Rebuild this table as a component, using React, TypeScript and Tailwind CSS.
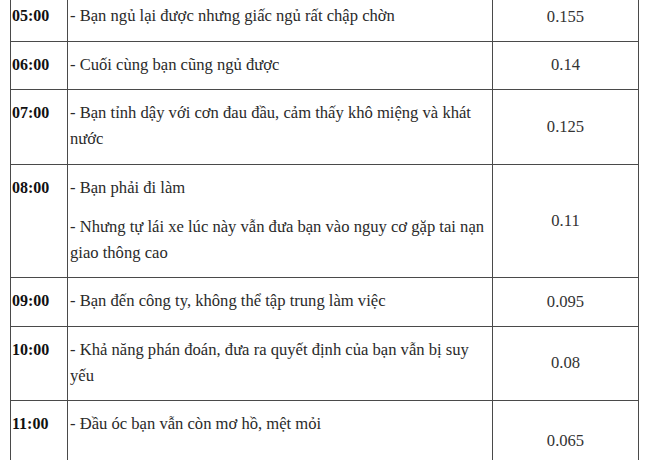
import React from "react";

type Row = { time: string; paras: string[]; value: string; h?: string };

const rows: Row[] = [
  { time: "05:00", paras: ["- Bạn ngủ lại được nhưng giấc ngủ rất chập chờn"], value: "0.155" },
  { time: "06:00", paras: ["- Cuối cùng bạn cũng ngủ được"], value: "0.14" },
  { time: "07:00", paras: ["- Bạn tỉnh dậy với cơn đau đầu, cảm thấy khô miệng và khát nước"], value: "0.125" },
  { time: "08:00", paras: ["- Bạn phải đi làm", "- Nhưng tự lái xe lúc này vẫn đưa bạn vào nguy cơ gặp tai nạn giao thông cao"], value: "0.11" },
  { time: "09:00", paras: ["- Bạn đến công ty, không thể tập trung làm việc"], value: "0.095" },
  { time: "10:00", paras: ["- Khả năng phán đoán, đưa ra quyết định của bạn vẫn bị suy yếu"], value: "0.08" },
  { time: "11:00", paras: ["- Đầu óc bạn vẫn còn mơ hồ, mệt mỏi"], value: "0.065", h: "h-[80px]" },
];

export default function App() {
  return (
    <div className="w-[650px] h-[460px] overflow-hidden bg-white pl-[10px] text-[16.6px] leading-[26px] text-[#2a2a2a]" style={{ fontFamily: '"Liberation Serif", "Times New Roman", serif' }}>
      <table className="border-collapse table-fixed w-[628px] mt-[-8px]">
        <colgroup>
          <col className="w-[57px]" />
          <col className="w-[425px]" />
          <col className="w-[146px]" />
        </colgroup>
        <tbody>
          {rows.map((r) => (
            <tr key={r.time} className={r.h ?? ""}>
              <td className="align-top border border-[#4a4a4a] pl-[1px] pt-[10px] pb-[11.5px] font-bold text-[16px] text-[#111]">
                {r.time}
              </td>
              <td className="align-top border border-[#4a4a4a] pl-[2px] pr-[4px] pt-[10px] pb-[11.5px]">
                {r.paras.map((p, i) => (
                  <p key={i} className={i > 0 ? "mt-[13px]" : ""}>{p}</p>
                ))}
              </td>
              <td className="align-middle text-center border border-[#4a4a4a] text-[#333]">
                {r.value}
              </td>
            </tr>
          ))}
        </tbody>
      </table>
    </div>
  );
}
